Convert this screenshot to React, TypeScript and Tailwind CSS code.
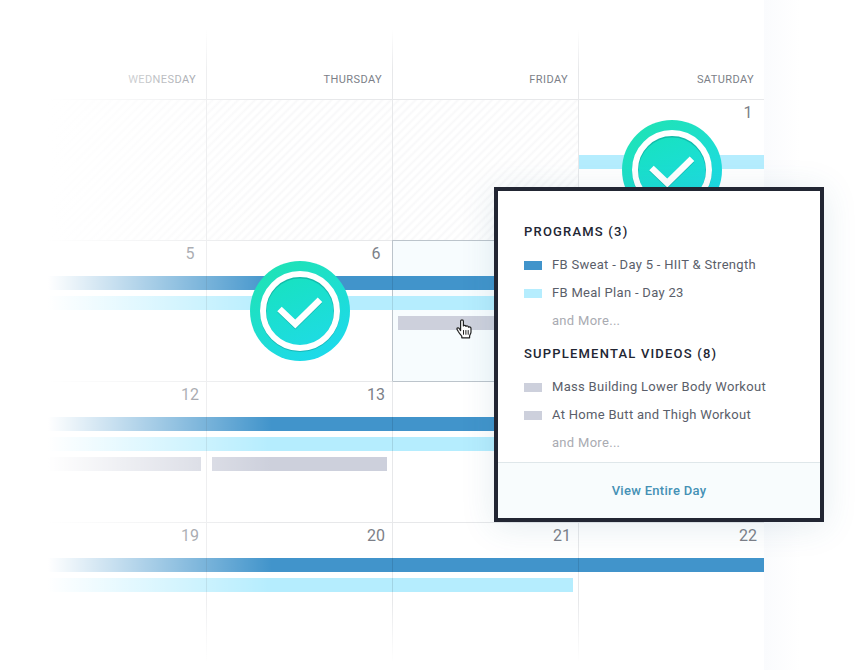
import React from "react";

type Tone = "blue" | "sky" | "gray";
type Span = "through" | "start" | "end" | "single";

interface Bar {
  tone: Tone;
  span: Span;
}

interface Day {
  date?: number;
  bars?: (Bar | null)[];
  outside?: boolean;
  completed?: boolean;
  active?: boolean;
  belowActive?: boolean;
}

const toneClass: Record<Tone, string> = {
  blue: "bg-[#4194cb]",
  sky: "bg-[#b5edfe]",
  gray: "bg-[#cdd0dc]",
};

const spanClass: Record<Span, string> = {
  through: "-ml-px border-l border-black/10",
  start: "",
  end: "-ml-px border-l border-black/10 mr-[5px]",
  single: "mx-[5px]",
};

const blue: Bar = { tone: "blue", span: "through" };
const sky: Bar = { tone: "sky", span: "through" };
const gray: Bar = { tone: "gray", span: "single" };

const weekdays = ["Wednesday", "Thursday", "Friday", "Saturday"];

const weeks: Day[][] = [
  [
    { outside: true },
    { outside: true },
    { outside: true },
    { date: 1, completed: true, bars: [null, { tone: "sky", span: "start" }] },
  ],
  [
    { date: 5, bars: [blue, sky] },
    { date: 6, bars: [blue, sky], completed: true },
    { bars: [blue, sky, gray], active: true },
    { bars: [blue, sky] },
  ],
  [
    { date: 12, bars: [blue, sky, { tone: "gray", span: "end" }] },
    { date: 13, bars: [blue, sky, gray] },
    { bars: [blue, sky], belowActive: true },
    { bars: [blue, sky] },
  ],
  [
    { date: 19, bars: [blue, sky] },
    { date: 20, bars: [blue, sky] },
    { date: 21, bars: [blue, { tone: "sky", span: "end" }] },
    { date: 22, bars: [blue] },
  ],
];

const groups: { title: string; items: { label: string; tone: Tone }[] }[] = [
  {
    title: "Programs (3)",
    items: [
      { label: "FB Sweat - Day 5 - HIIT & Strength", tone: "blue" },
      { label: "FB Meal Plan - Day 23", tone: "sky" },
    ],
  },
  {
    title: "Supplemental Videos (8)",
    items: [
      { label: "Mass Building Lower Body Workout", tone: "gray" },
      { label: "At Home Butt and Thigh Workout", tone: "gray" },
    ],
  },
];

function CompletedBadge({ id }: { id: string }) {
  return (
    <svg
      className="absolute top-5 left-[43px] z-20 size-[100px]"
      viewBox="0 0 100 100"
      role="img"
      aria-label="Completed"
    >
      <defs>
        <linearGradient id={id} x1="0.2" y1="0" x2="0.8" y2="1">
          <stop offset="0" stopColor="#1fe3b4" />
          <stop offset="1" stopColor="#1cd9ee" />
        </linearGradient>
        <linearGradient id={`${id}-inner`} x1="0.3" y1="0" x2="0.7" y2="1">
          <stop offset="0" stopColor="#17e2c0" />
          <stop offset="1" stopColor="#1fdbe4" />
        </linearGradient>
      </defs>
      <circle cx="50" cy="50" r="50" fill={`url(#${id})`} />
      <circle cx="50" cy="51" r="37" fill="none" stroke="#0c8f8a" strokeOpacity="0.45" strokeWidth="6" />
      <circle cx="50" cy="50" r="37" fill={`url(#${id}-inner)`} />
      <circle cx="50" cy="51" r="36" fill="none" stroke="#0c8f8a" strokeOpacity="0.45" strokeWidth="5" />
      <circle cx="50" cy="50" r="37" fill="none" stroke="#fff" strokeWidth="6" />
      <path d="M29.5 49 45.3 64 70 39.7" fill="none" stroke="#0c8f8a" strokeOpacity="0.45" strokeWidth="6.500" />
      <path d="M29.5 48 45.3 63 70 38.7" fill="none" stroke="#fff" strokeWidth="6.500" />
    </svg>
  );
}

function HandCursor() {
  return (
    <svg
      className="absolute top-[78px] left-[63px] z-20 h-5 w-4"
      viewBox="0 0 16 20"
      fill="#fff"
      stroke="#222"
      strokeWidth="1.2"
      strokeLinejoin="round"
      strokeLinecap="round"
      aria-hidden="true"
    >
      <path d="M4.6 11.6V2.2C4.6.3 7.4.3 7.4 2.2V6.9C8 6 9.8 6.2 10 7.4 10.8 6.6 12.3 7 12.5 8.2 13.6 7.6 15 8.2 15 9.6V13C15 14.8 13.6 15.6 13.6 17.2V18.8H5.8V17.4C5 16 3.2 14.4 2.3 12.6 1.8 11.5 1 10.8.9 9.9.8 8.7 2.5 8.5 3.3 9.5Z" />
      <path d="M7.5 11.5V15.3M9.9 11.5V15.3M12.2 11.5V15.3" strokeWidth="1" />
    </svg>
  );
}

function DayDetails() {
  return (
    <section
      aria-label="Day details"
      className="absolute -top-[54px] left-[101px] z-30 w-[330px] border-4 border-[#222633] bg-white text-left shadow-[0_4px_32px_rgba(50,110,140,0.13)]"
    >
      <div className="px-[26px] pt-[22px] pb-[5px]">
        {groups.map((group) => (
          <div key={group.title}>
            <h2 className="flex h-[38px] items-center text-[13px] leading-4 font-medium tracking-[1.2px] text-[#222633] uppercase">
              {group.title}
            </h2>
            <ul className="text-[13px] leading-7 tracking-[0.3px] text-[#5a5e6a]">
              {group.items.map((item) => (
                <li key={item.label} className="flex items-center gap-2.5 whitespace-nowrap">
                  <span className={`h-[9px] w-[18px] ${toneClass[item.tone]}`} />
                  {item.label}
                </li>
              ))}
              <li className="pl-7 text-[#a9abb2]">and More...</li>
            </ul>
          </div>
        ))}
      </div>
      <div className="flex h-14 items-center justify-center border-t border-[#dfe7ea] bg-[#f8fcfd]">
        <a href="#day" className="text-[13px] leading-4 font-medium tracking-[0.3px] text-[#4591b5]">
          View Entire Day
        </a>
      </div>
    </section>
  );
}

function DayCell({ day, id }: { day: Day; id: string }) {
  const edge = day.active
    ? "border-l-[#bcc4cb] border-t-[#bcc4cb] bg-[#f7fcfe]"
    : day.belowActive
      ? "border-l-[#e7e8ea] border-t-[#bcc4cb]"
      : "border-[#e7e8ea]";
  const hatch = day.outside
    ? "bg-[repeating-linear-gradient(135deg,#ffffff_0px,#ffffff_2px,#f8f8f9_4px,#ffffff_6px)]"
    : "";
  return (
    <td className={`relative h-[141px] border-t border-l p-0 align-top ${edge} ${hatch}`}>
      <div className="ml-auto flex h-[35px] w-8 items-start justify-center pt-px text-base text-[#7c7f88]">
        {day.date}
      </div>
      <div className="flex flex-col gap-1.5">
        {day.bars?.map((bar, i) => (
          <div key={i} className={`h-3.5 ${bar ? `${toneClass[bar.tone]} ${spanClass[bar.span]}` : ""}`} />
        ))}
      </div>
      {day.completed && <CompletedBadge id={id} />}
      {day.active && <HandCursor />}
      {day.active && <DayDetails />}
    </td>
  );
}

export default function App() {
  return (
    <main className="flex min-h-screen bg-white font-[Roboto,'Liberation_Sans',sans-serif]">
      <div className="relative flex-1 pl-5">
        <table className="w-full table-fixed border-separate border-spacing-0">
          <thead>
            <tr>
              {weekdays.map((name) => (
                <th
                  key={name}
                  scope="col"
                  className="h-[99px] border-l border-[#e7e8ea] pt-0 pr-2.5 pb-[11px] pl-0 text-right align-bottom text-[11px] leading-4 font-normal tracking-[0.4px] text-[#7c7f88] uppercase"
                >
                  {name}
                </th>
              ))}
            </tr>
          </thead>
          <tbody>
            {weeks.map((week, w) => (
              <tr key={w}>
                {week.map((day, d) => (
                  <DayCell key={d} day={day} id={`badge-${w}-${d}`} />
                ))}
              </tr>
            ))}
          </tbody>
        </table>
        <div className="pointer-events-none absolute inset-0 z-10 bg-[linear-gradient(to_right,#fff_48px,#ffffff00_272px),linear-gradient(to_bottom,#fff_30px,#ffffff00_70px),linear-gradient(to_top,#fff_8px,#ffffff00_70px)]" />
      </div>
      <div className="w-[94px] bg-[linear-gradient(to_right,#fafbfd,#ffffff_36px)]" />
    </main>
  );
}
